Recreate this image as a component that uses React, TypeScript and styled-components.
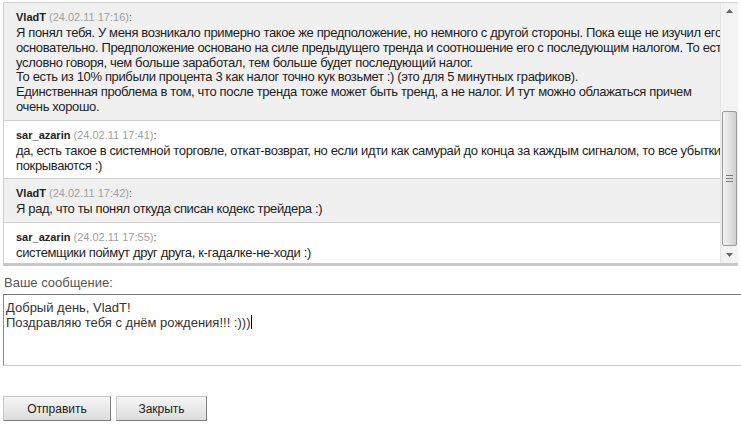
import styled, { createGlobalStyle } from 'styled-components';

const GlobalStyle = createGlobalStyle`
  body {
    margin: 0;
    background: #ffffff;
    font-family: Arial, "Liberation Sans", sans-serif;
    overflow: hidden;
  }
`;

const Page = styled.div`
  width: 741px;
  height: 428px;
  padding: 2px 0 0 3px;
  box-sizing: border-box;
  overflow: hidden;
`;

const ChatBox = styled.div`
  display: flex;
  width: 735px;
  height: 264px;
  border-top: 1px solid #d4d4d4;
  border-left: 1px solid #d0d0d0;
  border-bottom: 3px solid #c8c8c8;
  box-sizing: border-box;
`;

const List = styled.div`
  flex: 1;
  overflow: hidden;
  display: flex;
  flex-direction: column;
`;

const Message = styled.div<{ $shaded?: boolean }>`
  background: ${(p) => (p.$shaded ? '#f0f0f0' : '#ffffff')};
  border-bottom: 1px solid #cfcfcf;
  padding: 6px 0 5px 12px;
  flex-shrink: 0;
  &:last-child {
    border-bottom: none;
    flex: 1;
  }
`;

const Head = styled.div`
  font-size: 11px;
  line-height: 16px;
  color: #555555;
  white-space: nowrap;
`;

const Author = styled.b`
  color: #222222;
`;

const Stamp = styled.span`
  color: #a0a0a0;
`;

const Text = styled.div`
  font-size: 13px;
  line-height: 14.8px;
  letter-spacing: -0.36px;
  color: #1e1e1e;
  white-space: nowrap;
  margin-top: 1px;
`;

const Scrollbar = styled.div`
  width: 17px;
  display: flex;
  flex-direction: column;
  background: #f3f3f3;
  border-left: 1px solid #e4e4e4;
`;

const Arrow = styled.div`
  height: 16px;
  display: flex;
  align-items: center;
  justify-content: center;
  flex-shrink: 0;
`;

const Track = styled.div`
  flex: 1;
  display: flex;
  flex-direction: column;
  padding: 0 1px;
`;

const Thumb = styled.div`
  height: 133px;
  margin-top: auto;
  margin-bottom: 1px;
  border: 1px solid #9a9a9a;
  border-radius: 2px;
  background: linear-gradient(to right, #f4f4f4, #dedede 60%, #cfcfcf);
  display: flex;
  align-items: center;
  justify-content: center;
`;

const Grip = styled.div`
  width: 7px;
  height: 7px;
  background: repeating-linear-gradient(to bottom, #7a7a7a 0 1px, transparent 1px 3px);
`;

const Label = styled.div`
  margin: 9px 0 0 1px;
  font-size: 13px;
  line-height: 16px;
  color: #555555;
`;

const Input = styled.div`
  margin-top: 3px;
  height: 72px;
  width: 760px;
  box-sizing: border-box;
  border-top: 1px solid #777777;
  border-left: 1px solid #8a8a8a;
  border-bottom: 1px solid #cccccc;
  padding: 5px 2px;
  font-size: 13px;
  line-height: 15px;
  color: #333333;
`;

const Caret = styled.span`
  display: inline-block;
  width: 1px;
  height: 14px;
  background: #000000;
  vertical-align: -2px;
  margin-left: 1px;
`;

const Buttons = styled.div`
  display: flex;
  gap: 5px;
  margin-top: 30px;
`;

const Button = styled.button<{ $w: number }>`
  width: ${(p) => p.$w}px;
  height: 25px;
  font-family: Arial, "Liberation Sans", sans-serif;
  font-size: 12px;
  color: #222222;
  border: 1px solid #7d7d7d;
  border-top-color: #c8c8c8;
  border-left-color: #c8c8c8;
  background: linear-gradient(to bottom, #f6f6f6, #dcdcdc);
  padding: 0;
`;

const ArrowUp = () => (
  <svg width="7" height="4" viewBox="0 0 7 4">
    <path d="M0 4 L3.5 0 L7 4 Z" fill="#666" />
  </svg>
);

const ArrowDown = () => (
  <svg width="7" height="4" viewBox="0 0 7 4">
    <path d="M0 0 L3.5 4 L7 0 Z" fill="#666" />
  </svg>
);

const messages = [
  {
    author: 'VladT',
    stamp: '24.02.11 17:16',
    shaded: true,
    lines: [
      'Я понял тебя. У меня возникало примерно такое же предположение, но немного с другой стороны. Пока еще не изучил его',
      'основательно. Предположение основано на силе предыдущего тренда и соотношение его с последующим налогом. То есть',
      'условно говоря, чем больше заработал, тем больше будет последующий налог.',
      'То есть из 10% прибыли процента 3 как налог точно кук возьмет :) (это для 5 минутных графиков).',
      'Единственная проблема в том, что после тренда тоже может быть тренд, а не налог. И тут можно облажаться причем',
      'очень хорошо.',
    ],
  },
  {
    author: 'sar_azarin',
    stamp: '24.02.11 17:41',
    lines: [
      'да, есть такое в системной торговле, откат-возврат, но если идти как самурай до конца за каждым сигналом, то все убытки',
      'покрываются :)',
    ],
  },
  {
    author: 'VladT',
    stamp: '24.02.11 17:42',
    shaded: true,
    lines: ['Я рад, что ты понял откуда списан кодекс трейдера :)'],
  },
  {
    author: 'sar_azarin',
    stamp: '24.02.11 17:55',
    lines: ['системщики поймут друг друга, к-гадалке-не-ходи :)'],
  },
];

const App = () => {
  return (
    <Page>
      <GlobalStyle />
      <ChatBox>
        <List>
          {messages.map((m, i) => (
            <Message key={i} $shaded={m.shaded}>
              <Head>
                <Author>{m.author}</Author> <Stamp>({m.stamp})</Stamp>:
              </Head>
              <Text>
                {m.lines.map((l, j) => (
                  <div key={j}>{l}</div>
                ))}
              </Text>
            </Message>
          ))}
        </List>
        <Scrollbar>
          <Arrow>
            <ArrowUp />
          </Arrow>
          <Track>
            <Thumb>
              <Grip />
            </Thumb>
          </Track>
          <Arrow>
            <ArrowDown />
          </Arrow>
        </Scrollbar>
      </ChatBox>
      <Label>Ваше сообщение:</Label>
      <Input>
        <div>Добрый день, VladT!</div>
        <div>
          Поздравляю тебя с днём рождения!!! :)))
          <Caret />
        </div>
      </Input>
      <Buttons>
        <Button $w={108}>Отправить</Button>
        <Button $w={91}>Закрыть</Button>
      </Buttons>
    </Page>
  );
};

export default App;
